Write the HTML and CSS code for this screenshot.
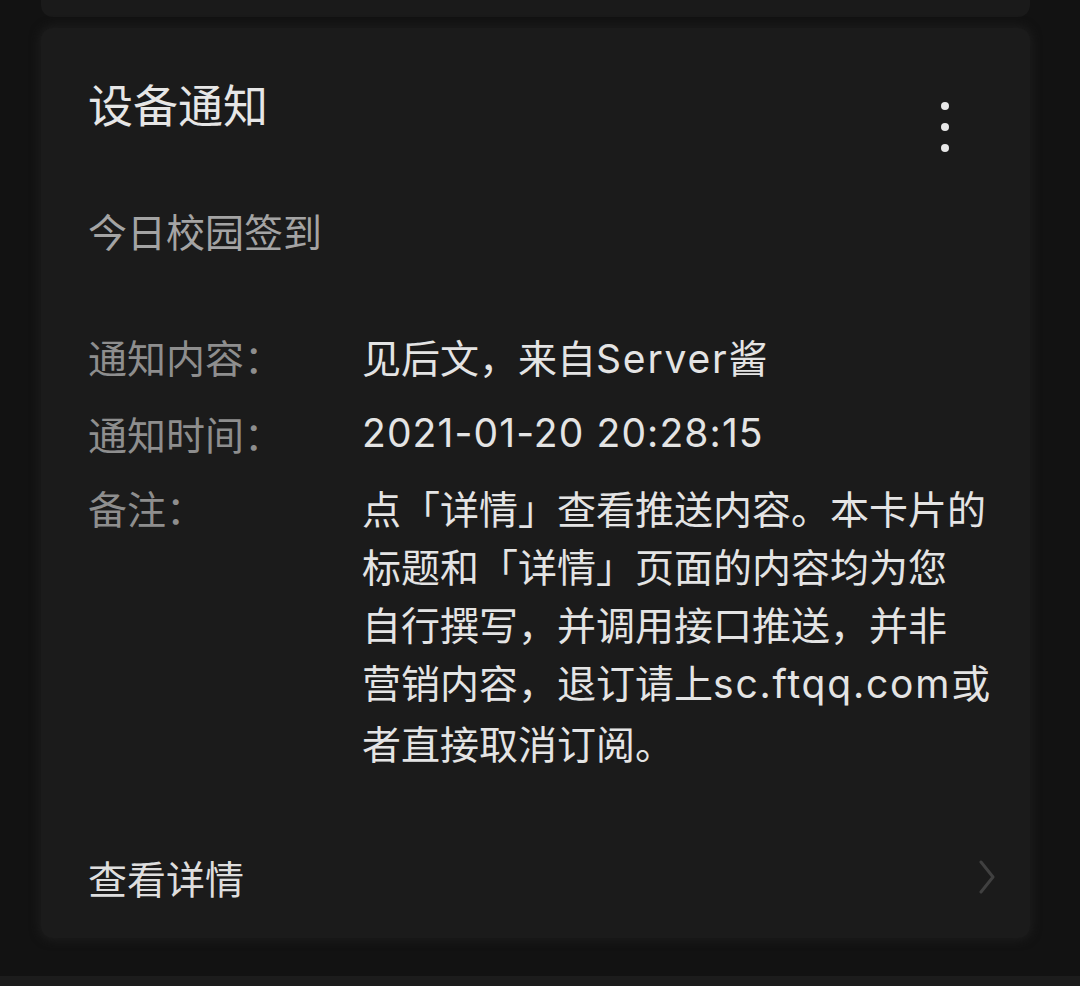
FILE: index.html
```html
<!DOCTYPE html>
<html lang="zh-CN">
<head>
<meta charset="utf-8">
<title>设备通知</title>
<link rel="stylesheet" href="styles.css">
</head>
<body>
<div class="screen">
  <div class="prev-card"></div>
  <section class="card">
    <header class="card-header">
      <h1 class="title">设备通知</h1>
      <div class="kebab" aria-label="更多">
        <span class="dot"></span><span class="dot"></span><span class="dot"></span>
      </div>
    </header>
    <p class="subtitle">今日校园签到</p>
    <div class="info">
      <div class="row">
        <div class="label">通知内容：</div>
        <div class="value">见后文，来自<span class="latin">Server</span>酱</div>
      </div>
      <div class="row">
        <div class="label">通知时间：</div>
        <div class="value date">2021-01-20 20:28:15</div>
      </div>
      <div class="row">
        <div class="label">备注：</div>
        <div class="value">点「详情」查看推送内容。本卡片的<br>标题和「详情」页面的内容均为您<br>自行撰写，并调用接口推送，并非<br>营销内容，退订请上<span class="latin">sc.ftqq.com</span>或<br>者直接取消订阅。</div>
      </div>
    </div>
    <footer class="card-footer">
      <span class="footer-text">查看详情</span>
      <svg class="chevron" width="18" height="34" viewBox="0 0 18 34"><path d="M3 2 L15 17 L3 32" fill="none" stroke="#404040" stroke-width="3" stroke-linecap="round" stroke-linejoin="round"/></svg>
    </footer>
  </section>
  <div class="next-card"></div>
</div>
</body>
</html>
```

FILE: styles.css
```css
html, body {
  margin: 0;
  padding: 0;
  background: #121212;
}
body {
  width: 1080px;
  height: 986px;
  overflow: hidden;
  font-family: "Noto Sans CJK SC", "Noto Sans", sans-serif;
}
.screen {
  display: flex;
  flex-direction: column;
  height: 986px;
}
.prev-card {
  height: 17px;
  margin: 0 50px 0 41px;
  background: #1a1a1a;
  border-radius: 0 0 12px 12px;
}
.card {
  margin: 11px 50px 0 41px;
  height: 910px;
  box-sizing: border-box;
  background: #1b1b1b;
  border-radius: 12px;
  padding: 46px 0 27px 47px;
  display: flex;
  flex-direction: column;
  box-shadow: 0 0 10px 2px rgba(30, 30, 30, 0.9);
}
.card-header {
  display: flex;
  justify-content: space-between;
  align-items: flex-start;
  padding-right: 81px;
  height: 60px;
}
.title {
  margin: 0;
  font-size: 45px;
  line-height: 60px;
  font-weight: 400;
  color: #e6e6e6;
}
.kebab {
  margin-top: 28px;
  display: flex;
  flex-direction: column;
  gap: 13px;
}
.dot {
  width: 8px;
  height: 8px;
  border-radius: 50%;
  background: #e8e8e8;
}
.subtitle {
  margin: 67px 0 0;
  font-size: 39px;
  line-height: 58px;
  color: #a4a4a4;
}
.info {
  margin-top: 68px;
  display: flex;
  flex-direction: column;
  gap: 16px;
}
.row {
  display: flex;
  font-size: 39px;
  line-height: 58px;
}
.label {
  width: 274px;
  flex-shrink: 0;
  color: #8e8e8e;
}
.value {
  color: #e4e4e4;
  white-space: nowrap;
}
.latin {
  font-family: "Inter", "Noto Sans CJK SC", sans-serif;
  letter-spacing: 1.8px;
}
.date {
  font-family: "Inter", "Noto Sans CJK SC", sans-serif;
  letter-spacing: 1.1px;
}
.card-footer {
  margin-top: 77px;
  display: flex;
  justify-content: space-between;
  align-items: center;
  padding-right: 34px;
  height: 58px;
}
.footer-text {
  font-size: 39px;
  line-height: 58px;
  color: #dedede;
}
.chevron {
  display: block;
}
.next-card {
  margin-top: 38px;
  height: 10px;
  background: #1c1c1c;
}
```
